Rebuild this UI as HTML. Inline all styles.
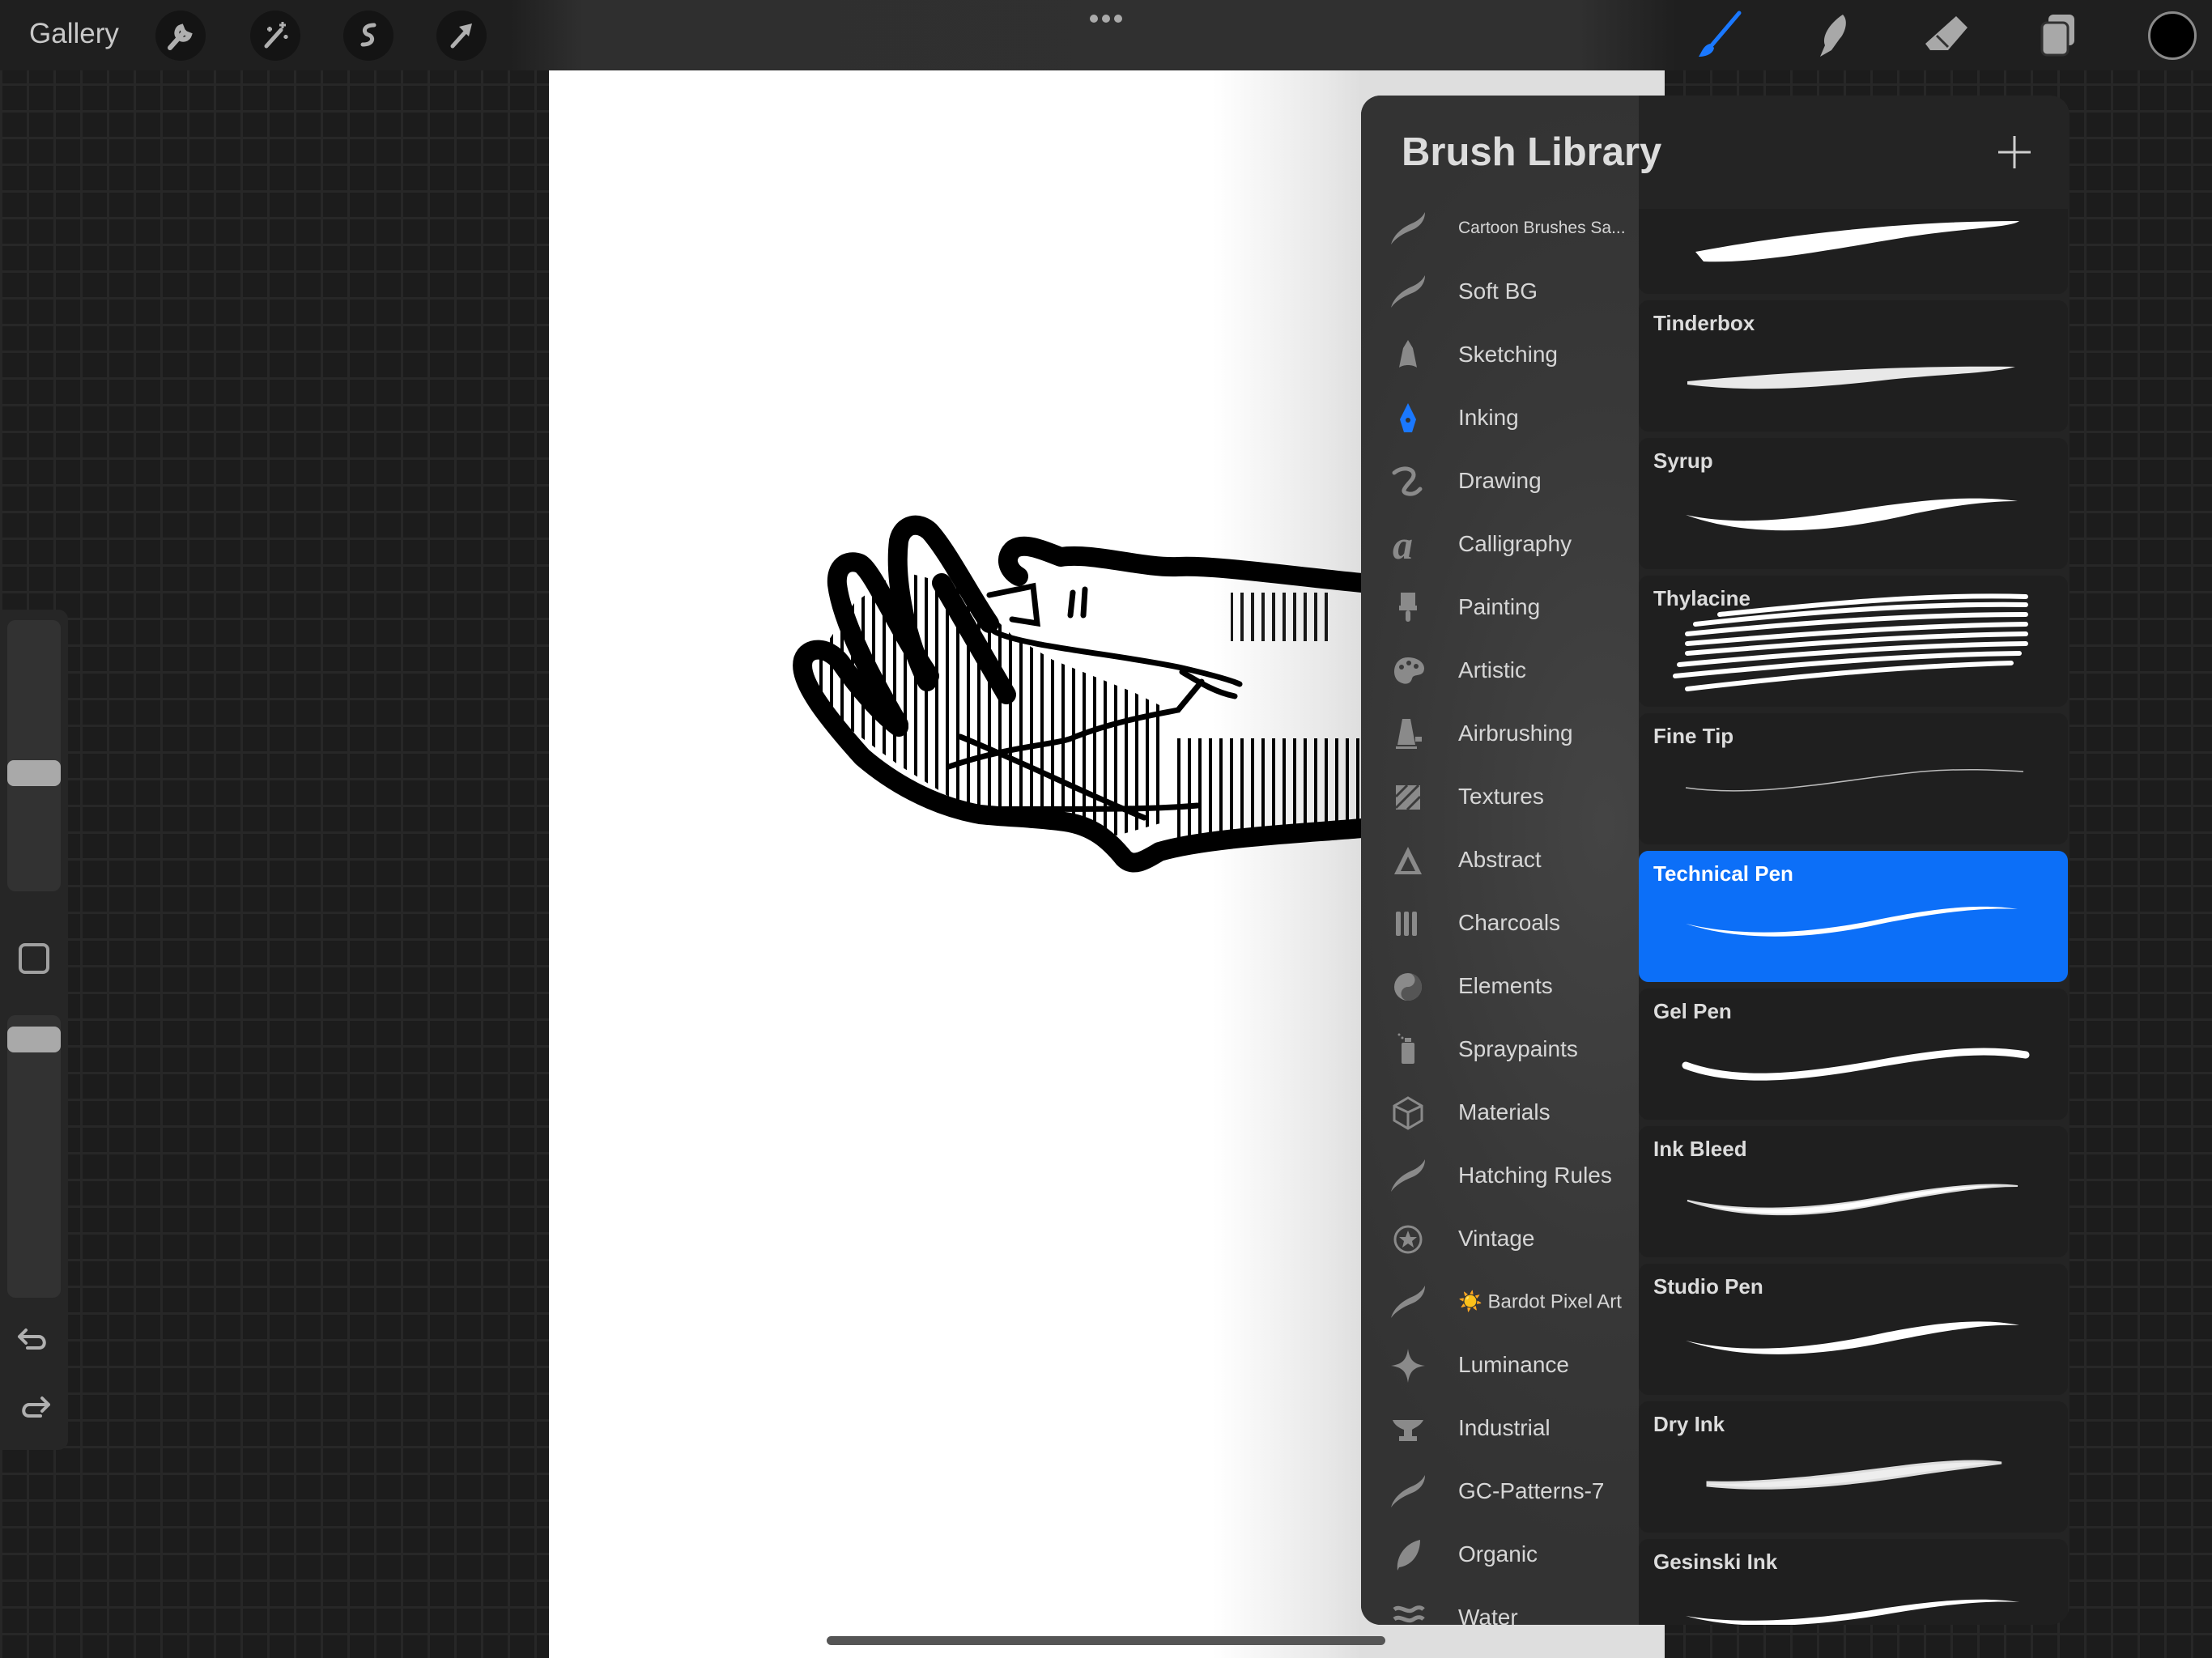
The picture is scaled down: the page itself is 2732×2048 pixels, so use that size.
<!DOCTYPE html>
<html><head><meta charset="utf-8"><style>
*{margin:0;padding:0;box-sizing:border-box}
body{width:2732px;height:2048px;overflow:hidden;position:relative;font-family:"Liberation Sans",sans-serif;
background-color:#1c1c1c;
background-image:linear-gradient(90deg,#272727 3px,transparent 3px),linear-gradient(#272727 3px,transparent 3px);
background-size:33px 33px;background-position:0 4px}
.abs{position:absolute}
#top{left:0;top:0;width:2732px;height:87px;background:linear-gradient(90deg,#1f1f1f 0,#1f1f1f 630px,#2f2f2f 720px,#303030 1950px,#1f1f1f 2070px)}
.tb{position:absolute;top:13px;width:62px;height:62px;border-radius:50%;background:#141414}
#canvas{left:678px;top:87px;width:1378px;height:1961px;background:linear-gradient(90deg,#fff 0,#fff 820px,#e8e8e8 960px,#dedede 1003px,#dedede 1378px)}
#side{left:0;top:753px;width:84px;height:1038px;background:#262626;border-radius:0 12px 12px 0}
.track{position:absolute;left:9px;width:66px;background:#323232;border-radius:10px}
.thumb{position:absolute;left:9px;width:66px;height:32px;background:#a9a9a9;border-radius:8px}
#panel{left:1681px;top:118px;width:875px;height:1889px;border-radius:24px 24px 24px 24px;overflow:hidden;background:#242424}
#lcol{position:absolute;left:0;top:0;width:343px;height:1889px;background:radial-gradient(ellipse 420px 900px at 300px 900px,#444 0,#383838 60%,#333 100%)}
#title{position:absolute;left:50px;top:42px;font-size:49px;font-weight:bold;color:#dcdcdc}
.cat{position:absolute;left:0;width:343px;height:60px}
.cat span{position:absolute;left:120px;top:50%;transform:translateY(-50%);font-size:28px;color:#d6d6d6;white-space:nowrap}
.cat svg{position:absolute;left:33px;top:6px;width:50px;height:50px}
#list{position:absolute;left:343px;top:140px;width:532px;height:1749px;overflow:hidden}
.card{position:absolute;left:0;width:530px;height:162px;background:#1f1f1f;border-radius:12px}
.card b{position:absolute;left:18px;top:13px;font-size:26px;color:#dcdcdc}
.card svg{position:absolute;left:0;top:0;width:530px;height:162px}
.sel{background:#0c6ff8}
.sel b{color:#fff}
</style></head><body>
<svg width="0" height="0" style="position:absolute"><defs>
<symbol id="sw" viewBox="0 0 50 50"><path d="M4,44 C8,30 20,22 32,17 C40,13 44,8 46,4 C46,14 40,22 30,26 C18,31 10,36 4,44Z" fill="#8a8a8a"/></symbol>
<pattern id="hat" width="13" height="40" patternUnits="userSpaceOnUse"><rect x="0" y="0" width="4" height="40" fill="#000"/></pattern>
</defs></svg>

<div id="top" class="abs"></div>
<div class="abs" style="left:36px;top:22px;font-size:35px;color:#c8c8c8">Gallery</div>
<div class="tb" style="left:192px"></div><div class="tb" style="left:309px"></div><div class="tb" style="left:424px"></div><div class="tb" style="left:539px"></div>
<svg class="abs" style="left:192px;top:13px" width="62" height="62" viewBox="0 0 62 62"><path d="M18,46 L34,28 M32,20 a8,8 0 1 0 10,10 l-5,-2 -3,-3z" stroke="#b0b0b0" stroke-width="6" fill="none" stroke-linecap="round"/></svg>
<svg class="abs" style="left:309px;top:13px" width="62" height="62" viewBox="0 0 62 62"><path d="M20,44 L38,24" stroke="#b0b0b0" stroke-width="5" stroke-linecap="round"/><path d="M40,14 v8 M36,18 h8 M24,20 v6 M21,23 h6 M44,30 v5 M41.5,32.5 h5" stroke="#b0b0b0" stroke-width="3"/></svg>
<svg class="abs" style="left:424px;top:13px" width="62" height="62" viewBox="0 0 62 62"><path d="M38,18 C24,18 24,28 31,30 C38,32 38,42 24,42" stroke="#b0b0b0" stroke-width="5" fill="none" stroke-linecap="round"/></svg>
<svg class="abs" style="left:539px;top:13px" width="62" height="62" viewBox="0 0 62 62"><path d="M20,44 L38,24" stroke="#b0b0b0" stroke-width="5" stroke-linecap="round"/><path d="M44,16 L28,20 L40,32Z" fill="#b0b0b0"/></svg>
<div class="abs" style="left:1346px;top:18px;width:40px;height:12px;display:flex;justify-content:space-between"><i style="width:10px;height:10px;border-radius:5px;background:#aaa"></i><i style="width:10px;height:10px;border-radius:5px;background:#aaa"></i><i style="width:10px;height:10px;border-radius:5px;background:#aaa"></i></div>
<svg class="abs" style="left:2092px;top:12px" width="64" height="64" viewBox="0 0 64 64"><path d="M56,4 L22,44" stroke="#1a78ff" stroke-width="5" stroke-linecap="round"/><path d="M20,42 C12,44 10,52 6,58 C16,58 24,54 25,47Z" fill="#1a78ff"/></svg>
<svg class="abs" style="left:2232px;top:12px" width="64" height="64" viewBox="0 0 64 64"><path d="M44,6 C52,14 46,30 40,36 L30,50 L16,58 L22,44 C18,34 26,18 44,6Z" fill="#a8a8a8"/></svg>
<svg class="abs" style="left:2372px;top:12px" width="64" height="64" viewBox="0 0 64 64"><path d="M44,8 L58,22 L34,50 L12,50 L6,42Z" fill="#a8a8a8"/><path d="M20,32 L34,46" stroke="#303030" stroke-width="3"/></svg>
<svg class="abs" style="left:2512px;top:12px" width="64" height="64" viewBox="0 0 64 64"><rect x="18" y="6" width="32" height="38" rx="6" fill="#a8a8a8"/><rect x="10" y="16" width="32" height="40" rx="6" fill="#a8a8a8" stroke="#303030" stroke-width="3"/></svg>
<div class="abs" style="left:2653px;top:14px;width:60px;height:60px;border-radius:50%;background:#000;border:3px solid #8a8a8a"></div>

<div id="canvas" class="abs"></div>
<svg class="abs" style="left:960px;top:620px" width="740" height="480" viewBox="0 0 740 480">
<polygon points="40,205 95,125 150,85 230,105 290,165 340,195 440,235 480,255 480,395 420,412 250,388 150,325 55,255" fill="url(#hat)"/>
<polygon points="490,292 722,292 722,402 490,428" fill="url(#hat)"/>
<polygon points="560,112 680,112 680,172 560,172" fill="url(#hat)" opacity="0.9"/>
<g fill="none" stroke="#000" stroke-width="24" stroke-linecap="round" stroke-linejoin="round">
<path d="M722,100 C620,90 540,78 495,80 C450,82 390,62 350,68 C325,58 305,50 292,58 C280,68 284,84 298,92"/>
<path d="M722,403 C640,410 530,415 472,432 C455,442 440,452 428,440 C410,418 390,400 355,395 C320,390 290,390 250,386 C190,375 140,345 105,315 C60,265 25,220 32,195 C38,178 62,178 78,198 C100,230 128,262 150,278"/>
<path d="M150,275 C118,220 80,150 74,102 C72,80 86,70 102,76 C118,84 150,160 188,215"/>
<path d="M185,222 C155,160 145,90 150,48 C155,26 175,24 188,36 C210,60 238,115 262,150"/>
<path d="M203,100 L283,238" stroke-width="24"/>
</g>
<g fill="none" stroke="#000" stroke-width="7" stroke-linecap="round">
<path d="M262,115 L316,104 L321,150 L290,145"/>
<path d="M268,160 C300,178 420,188 500,205 C530,212 560,220 571,225"/>
<path d="M500,210 C520,222 540,235 565,240"/>
<path d="M212,327 C290,300 350,300 368,290 C420,270 470,262 495,257 L524,222"/>
<path d="M226,290 C300,320 380,360 453,390"/>
<path d="M226,380 C320,378 440,382 519,375"/>
<path d="M365,112 L362,140 M380,108 L378,140"/>
</g>
</svg>

<div id="side" class="abs">
<div class="track" style="top:13px;height:335px"></div>
<div class="thumb" style="top:186px"></div>
<div class="abs" style="left:23px;top:412px;width:38px;height:38px;border:4px solid #a0a0a0;border-radius:8px"></div>
<div class="track" style="top:501px;height:349px"></div>
<div class="thumb" style="top:515px"></div>
<svg class="abs" style="left:20px;top:882px" width="44" height="40" viewBox="0 0 44 40"><path d="M12,8 L4,16 L12,24 M4,16 H28 C36,16 38,30 28,30 H14" stroke="#b0b0b0" stroke-width="4" fill="none" stroke-linecap="round" stroke-linejoin="round"/></svg>
<svg class="abs" style="left:20px;top:966px" width="44" height="40" viewBox="0 0 44 40"><path d="M32,8 L40,16 L32,24 M40,16 H16 C8,16 6,30 16,30 H30" stroke="#b0b0b0" stroke-width="4" fill="none" stroke-linecap="round" stroke-linejoin="round"/></svg>
</div>

<div id="panel" class="abs">
<div id="lcol"></div>
<div id="title">Brush Library</div>
<svg class="abs" style="left:785px;top:48px" width="44" height="44" viewBox="0 0 44 44"><path d="M22,2 V42 M2,22 H42" stroke="#cfcfcf" stroke-width="3"/></svg>

<div class="cat" style="top:134px"><svg><use href="#sw"/></svg><span style="font-size:21px">Cartoon Brushes Sa...</span></div>
<div class="cat" style="top:212px"><svg><use href="#sw"/></svg><span>Soft BG</span></div>
<div class="cat" style="top:290px"><svg viewBox="0 0 50 50"><path d="M25,6 L31,16 L36,40 C30,36 20,36 14,40 L19,16Z" fill="#8a8a8a"/></svg><span>Sketching</span></div>
<div class="cat" style="top:368px"><svg viewBox="0 0 50 50"><path d="M25,6 L35,26 L30,42 H20 L15,26Z" fill="#1a78ff"/><circle cx="25" cy="27" r="3" fill="#333"/></svg><span>Inking</span></div>
<div class="cat" style="top:446px"><svg viewBox="0 0 50 50"><path d="M8,14 C20,4 38,10 30,22 C22,32 14,38 26,40 C34,41 38,36 40,34" stroke="#8a8a8a" stroke-width="5" fill="none" stroke-linecap="round"/></svg><span>Drawing</span></div>
<div class="cat" style="top:524px"><svg viewBox="0 0 50 50"><text x="6" y="42" font-family="Liberation Serif,serif" font-style="italic" font-weight="bold" font-size="50" fill="#8a8a8a">a</text></svg><span>Calligraphy</span></div>
<div class="cat" style="top:602px"><svg viewBox="0 0 50 50"><rect x="16" y="6" width="18" height="16" fill="#8a8a8a"/><rect x="14" y="22" width="22" height="6" fill="#8a8a8a"/><rect x="22" y="28" width="6" height="14" rx="3" fill="#8a8a8a"/></svg><span>Painting</span></div>
<div class="cat" style="top:680px"><svg viewBox="0 0 50 50"><path d="M25,8 C40,8 48,18 44,26 C40,32 32,28 30,34 C28,42 20,42 14,38 C4,32 6,8 25,8Z" fill="#8a8a8a"/><circle cx="17" cy="20" r="3" fill="#3a3a3a"/><circle cx="26" cy="15" r="3" fill="#3a3a3a"/><circle cx="35" cy="19" r="3" fill="#3a3a3a"/></svg><span>Artistic</span></div>
<div class="cat" style="top:758px"><svg viewBox="0 0 50 50"><path d="M18,6 H28 L34,38 H12Z" fill="#8a8a8a"/><rect x="10" y="40" width="26" height="3" fill="#8a8a8a"/><rect x="34" y="28" width="8" height="6" fill="#8a8a8a"/></svg><span>Airbrushing</span></div>
<div class="cat" style="top:836px"><svg viewBox="0 0 50 50"><rect x="10" y="10" width="30" height="30" fill="#8a8a8a"/><path d="M10,24 L24,10 M10,38 L38,10 M24,40 L40,24" stroke="#3a3a3a" stroke-width="3"/></svg><span>Textures</span></div>
<div class="cat" style="top:914px"><svg viewBox="0 0 50 50"><path d="M25,8 L42,42 H8Z M25,20 L16,38 H34Z" fill="#8a8a8a" fill-rule="evenodd"/></svg><span>Abstract</span></div>
<div class="cat" style="top:992px"><svg viewBox="0 0 50 50"><rect x="10" y="10" width="6" height="30" rx="2" fill="#8a8a8a"/><rect x="20" y="10" width="6" height="30" rx="2" fill="#8a8a8a"/><rect x="30" y="10" width="6" height="30" rx="2" fill="#8a8a8a"/></svg><span>Charcoals</span></div>
<div class="cat" style="top:1070px"><svg viewBox="0 0 50 50"><circle cx="25" cy="25" r="17" fill="#8a8a8a"/><path d="M25,8 A8.5,8.5 0 0 1 25,25 A8.5,8.5 0 0 0 25,42 A17,17 0 0 0 25,8Z" fill="#555"/></svg><span>Elements</span></div>
<div class="cat" style="top:1148px"><svg viewBox="0 0 50 50"><rect x="17" y="16" width="16" height="26" rx="2" fill="#8a8a8a"/><rect x="21" y="10" width="8" height="5" fill="#8a8a8a"/><circle cx="14" cy="6" r="1.5" fill="#8a8a8a"/><circle cx="18" cy="10" r="1.5" fill="#8a8a8a"/></svg><span>Spraypaints</span></div>
<div class="cat" style="top:1226px"><svg viewBox="0 0 50 50"><path d="M25,6 L42,16 V34 L25,44 L8,34 V16Z M25,24 L8,16 M25,24 L42,16 M25,24 V44" stroke="#8a8a8a" stroke-width="3" fill="none"/></svg><span>Materials</span></div>
<div class="cat" style="top:1304px"><svg><use href="#sw"/></svg><span>Hatching Rules</span></div>
<div class="cat" style="top:1382px"><svg viewBox="0 0 50 50"><circle cx="25" cy="25" r="16" stroke="#8a8a8a" stroke-width="3" fill="none"/><path d="M25,14 L28,22 L36,22 L30,27 L32,35 L25,30 L18,35 L20,27 L14,22 L22,22Z" fill="#8a8a8a"/></svg><span>Vintage</span></div>
<div class="cat" style="top:1460px"><svg><use href="#sw"/></svg><span style="font-size:24px">☀️ Bardot Pixel Art</span></div>
<div class="cat" style="top:1538px"><svg viewBox="0 0 50 50"><path d="M25,4 C27,18 32,23 46,25 C32,27 27,32 25,46 C23,32 18,27 4,25 C18,23 23,18 25,4Z" fill="#8a8a8a"/></svg><span>Luminance</span></div>
<div class="cat" style="top:1616px"><svg viewBox="0 0 50 50"><path d="M6,14 H44 C40,22 32,24 30,26 V34 H36 V40 H14 V34 H20 V26 C14,24 8,20 6,14Z" fill="#8a8a8a"/></svg><span>Industrial</span></div>
<div class="cat" style="top:1694px"><svg><use href="#sw"/></svg><span>GC-Patterns-7</span></div>
<div class="cat" style="top:1772px"><svg viewBox="0 0 50 50"><path d="M12,44 C10,26 22,10 40,6 C40,26 28,38 14,40Z" fill="#8a8a8a"/></svg><span>Organic</span></div>
<div class="cat" style="top:1850px"><svg viewBox="0 0 50 50"><path d="M8,14 C16,8 24,20 32,14 C38,10 42,12 44,14 M8,26 C16,20 24,32 32,26 C38,22 42,24 44,26 M8,38 C16,32 24,44 32,38 C38,34 42,36 44,38" stroke="#8a8a8a" stroke-width="5" fill="none"/></svg><span>Water</span></div>

<div id="list">
<div class="card" style="top:-57px"><svg viewBox="0 0 530 162"><path d="M70,110 C150,95 300,72 470,72 C460,80 410,80 330,92 C250,105 150,125 80,122Z" fill="#fff"/></svg></div>
<div class="card" style="top:113px"><b>Tinderbox</b><svg viewBox="0 0 530 162"><path d="M60,100 C150,92 300,80 465,82 C440,90 360,92 300,99 C220,108 140,114 60,104Z" fill="#e8e8e8"/></svg></div>
<div class="card" style="top:283px"><b>Syrup</b><svg viewBox="0 0 530 162"><path d="M58,95 C150,115 250,88 350,78 C400,73 440,74 468,78 C430,78 380,84 320,98 C240,115 140,125 58,95Z" fill="#fff"/></svg></div>
<div class="card" style="top:453px"><b>Thylacine</b><svg viewBox="0 0 530 162"><g stroke="#fff" stroke-width="6" fill="none" stroke-linecap="round"><path d="M100,48 C200,38 350,22 478,26"/><path d="M70,60 C180,48 330,34 478,36"/><path d="M60,72 C180,60 330,48 478,48"/><path d="M60,84 C180,74 330,62 478,60"/><path d="M60,96 C180,86 330,74 478,72"/><path d="M50,110 C180,98 330,86 478,84"/><path d="M45,124 C170,112 320,98 470,96"/><path d="M60,140 C180,126 320,112 460,108"/></g></svg></div>
<div class="card" style="top:623px"><b>Fine Tip</b><svg viewBox="0 0 530 162"><path d="M58,92 C150,105 250,82 350,72 C400,68 440,70 475,72" stroke="#bbb" stroke-width="1.5" fill="none"/></svg></div>
<div class="card sel" style="top:793px"><b>Technical Pen</b><svg viewBox="0 0 530 162"><path d="M58,90 C120,105 200,105 300,84 C380,68 430,66 468,72 C430,70 380,74 300,90 C200,112 120,110 58,90Z" fill="#fff"/></svg></div>
<div class="card" style="top:963px"><b>Gel Pen</b><svg viewBox="0 0 530 162"><path d="M58,95 C120,118 200,110 300,92 C380,78 430,74 478,82" stroke="#fff" stroke-width="9" fill="none" stroke-linecap="round"/></svg></div>
<div class="card" style="top:1133px"><b>Ink Bleed</b><svg viewBox="0 0 530 162"><path d="M60,92 C120,105 200,106 300,88 C380,74 430,70 468,74 C430,74 380,80 300,96 C200,116 120,112 60,92Z" fill="#fff" stroke="#ddd" stroke-width="2"/></svg></div>
<div class="card" style="top:1303px"><b>Studio Pen</b><svg viewBox="0 0 530 162"><path d="M58,95 C120,110 200,108 300,86 C380,70 430,68 470,76 C430,74 380,82 300,98 C200,118 120,116 58,95Z" fill="#fff"/></svg></div>
<div class="card" style="top:1473px"><b>Dry Ink</b><svg viewBox="0 0 530 162"><path d="M85,100 C160,102 250,90 330,80 C380,74 420,72 448,76 C420,80 380,84 330,92 C250,104 160,112 85,104Z" fill="#eee" stroke="#ddd" stroke-width="3"/></svg></div>
<div class="card" style="top:1643px"><b>Gesinski Ink</b><svg viewBox="0 0 530 162"><path d="M58,95 C120,105 200,102 300,86 C380,74 430,72 470,78 C430,76 380,80 300,94 C200,110 120,112 58,95Z" fill="#fff"/></svg></div>
</div>
</div>

<div class="abs" style="left:1021px;top:2021px;width:690px;height:11px;border-radius:6px;background:#555"></div>
</body></html>
